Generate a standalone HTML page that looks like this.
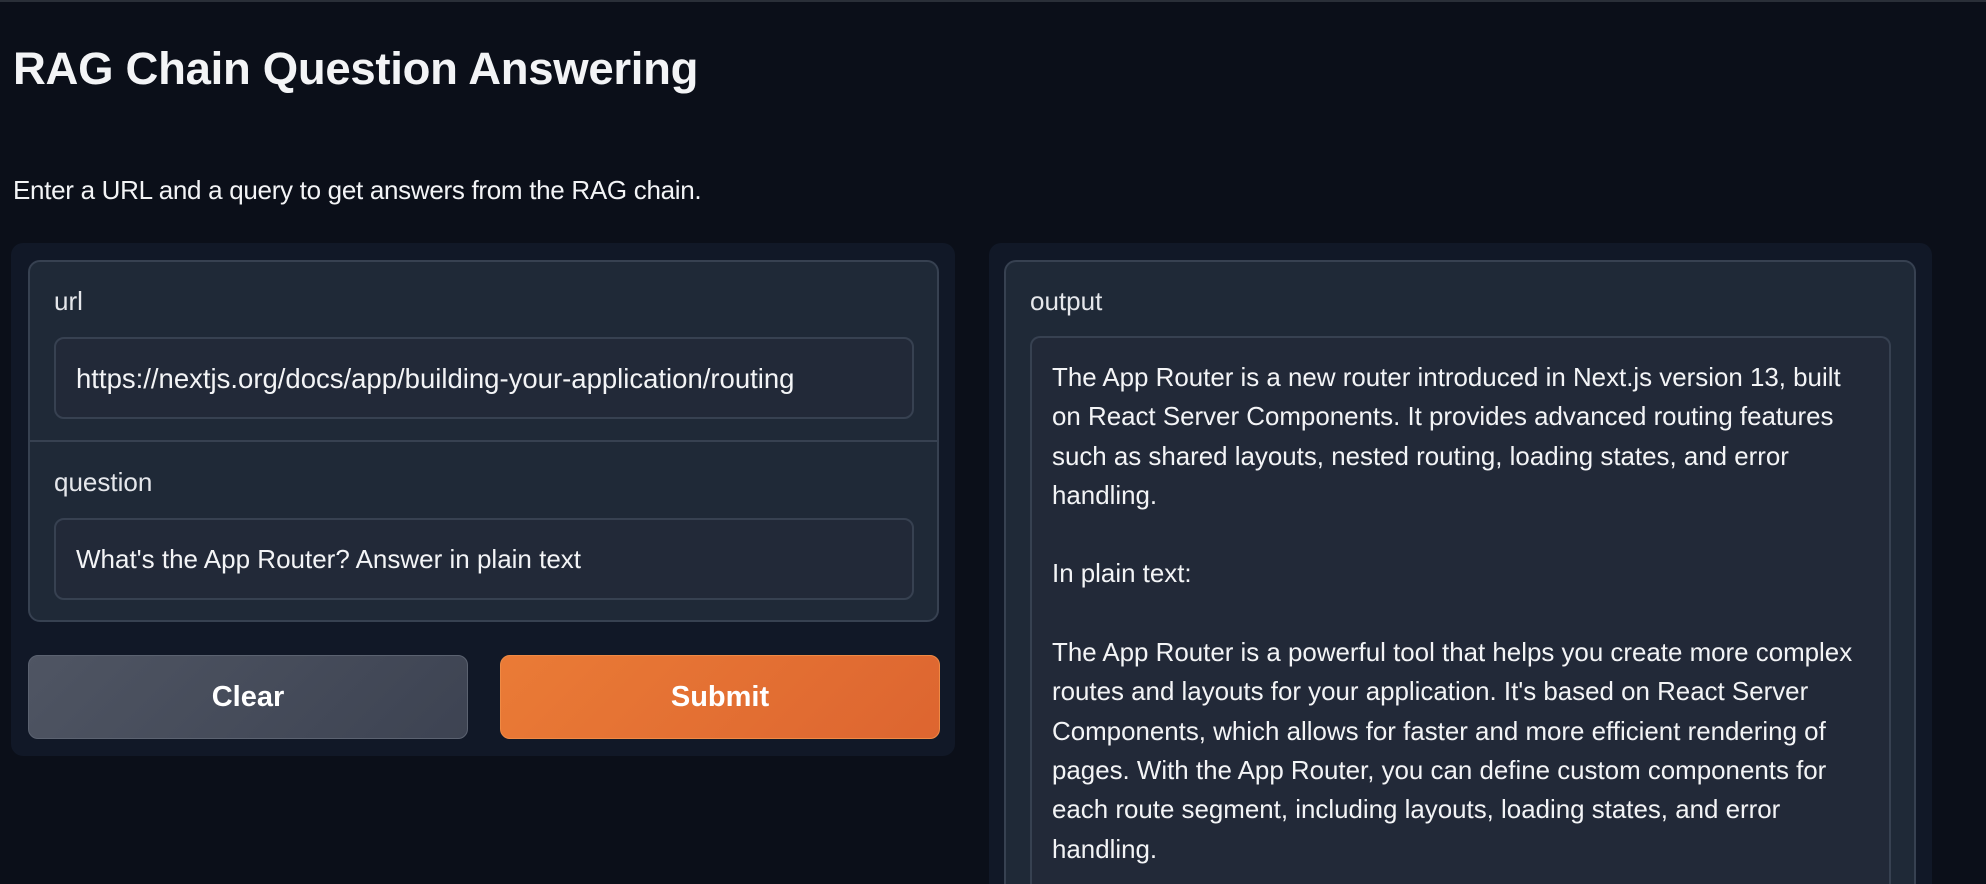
<!DOCTYPE html>
<html><head><style>
*{box-sizing:border-box;margin:0;padding:0}
html,body{width:1986px;height:884px;overflow:hidden}
body{background:#0b0f19;font-family:"Liberation Sans",sans-serif;color:#f3f4f6;position:relative}
.a{position:absolute}
h1{position:absolute;left:13px;top:43px;font-size:45.5px;font-weight:bold;letter-spacing:-0.3px;white-space:nowrap}
.sub{left:13px;top:175px;font-size:26px;white-space:nowrap;letter-spacing:-0.3px}
.panel{background:#111827;border-radius:12px}
.blk{background:#1f2937;border:2px solid #374151;border-radius:12px}
.lbl{font-size:26px;color:#e5e7eb;white-space:nowrap}
.ta{background:#222938;border:2px solid #374151;border-radius:10px}
.tx{font-size:26px;white-space:nowrap}
.btn{border-radius:10px;font-weight:bold;font-size:29px;display:flex;align-items:center;justify-content:center;color:#fff}
.out div{height:39.3px;line-height:39.3px}
</style></head><body>
<div class="a" style="left:0;top:0;width:1986px;height:2px;background:#2a2f38"></div>
<h1>RAG Chain Question Answering</h1>
<div class="a sub">Enter a URL and a query to get answers from the RAG chain.</div>

<div class="a panel" style="left:11px;top:243px;width:944px;height:513px"></div>
<div class="a blk" style="left:28px;top:260px;width:911px;height:362px"></div>
<div class="a" style="left:29px;top:440px;width:909px;height:2px;background:#374151"></div>
<div class="a lbl" style="left:54px;top:286px">url</div>
<div class="a ta" style="left:54px;top:337px;width:860px;height:82px"></div>
<div class="a tx" style="left:76px;top:363px;font-size:27.5px">https://nextjs.org/docs/app/building-your-application/routing</div>
<div class="a lbl" style="left:54px;top:467px">question</div>
<div class="a ta" style="left:54px;top:518px;width:860px;height:82px"></div>
<div class="a tx" style="left:76px;top:544px">What's the App Router? Answer in plain text</div>
<div class="a btn" style="left:28px;top:655px;width:440px;height:84px;background:linear-gradient(135deg,#4f5563,#3d4352);border:1px solid #5b6270">Clear</div>
<div class="a btn" style="left:500px;top:655px;width:440px;height:84px;background:linear-gradient(135deg,#ea7b36,#dd6530);border:1px solid #ef8a45">Submit</div>

<div class="a panel" style="left:989px;top:243px;width:943px;height:641px;border-radius:12px 12px 0 0"></div>
<div class="a blk" style="left:1004px;top:260px;width:912px;height:624px;border-bottom:none;border-radius:12px 12px 0 0"></div>
<div class="a lbl" style="left:1030px;top:286px">output</div>
<div class="a ta" style="left:1030px;top:336px;width:861px;height:548px;border-bottom:none;border-radius:10px 10px 0 0"></div>
<div class="a tx out" style="left:1052px;top:359px;font-size:25.9px">
<div>The App Router is a new router introduced in Next.js version 13, built</div>
<div>on React Server Components. It provides advanced routing features</div>
<div>such as shared layouts, nested routing, loading states, and error</div>
<div>handling.</div>
<div></div>
<div>In plain text:</div>
<div></div>
<div>The App Router is a powerful tool that helps you create more complex</div>
<div>routes and layouts for your application. It's based on React Server</div>
<div>Components, which allows for faster and more efficient rendering of</div>
<div>pages. With the App Router, you can define custom components for</div>
<div>each route segment, including layouts, loading states, and error</div>
<div>handling.</div>
</div>
</body></html>
